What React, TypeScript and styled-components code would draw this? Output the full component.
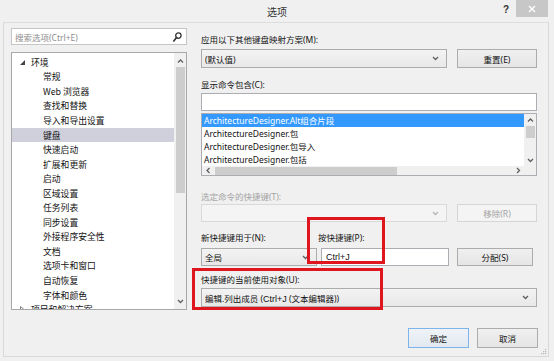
import React from "react";
import styled, { createGlobalStyle, css } from "styled-components";

const Global = createGlobalStyle`
  html, body { margin: 0; padding: 0; background: #f0f0f0; }
  body {
    font-family: "Noto Sans", "Noto Sans CJK SC", sans-serif;
    font-size: 8.5px;
    color: #111;
  }
  * { box-sizing: border-box; }
`;

const Window = styled.div`
  position: relative;
  width: 554px;
  height: 361px;
  background: #f0f0f0;
  display: flex;
  flex-direction: column;
  overflow: hidden;
`;

const TitleBar = styled.div`
  height: 22px;
  flex: none;
  display: grid;
  grid-template-columns: 1fr auto 1fr;
  align-items: center;
`;

const TitleText = styled.div`
  grid-column: 2;
  font-family: "Noto Sans CJK SC", sans-serif;
  font-size: 10px;
  color: #333;
  padding-top: 1px;
`;

const TitleControls = styled.div`
  grid-column: 3;
  justify-self: end;
  align-self: start;
  display: flex;
  align-items: flex-start;
  gap: 7px;
  padding-right: 6px;
`;

const HelpMark = styled.span`
  font-family: "Liberation Sans", sans-serif;
  font-weight: bold;
  font-size: 10px;
  color: #333;
  margin-top: 4px;
`;

const CloseButton = styled.div`
  width: 32px;
  height: 17px;
  background: #c7c7c7;
  color: #fff;
  display: flex;
  align-items: center;
  justify-content: center;
`;

const Frame = styled.div`
  position: relative;
  margin: 0 5px 0 3px;
  height: 335px;
  border: 1px solid #d9d9d9;
  border-top-color: #dedede;
  display: grid;
  grid-template-columns: 176px 336px;
  column-gap: 14px;
  padding: 5px 0 0 7px;
`;

const LeftCol = styled.div`
  display: flex;
  flex-direction: column;
  gap: 7px;
`;

const SearchBox = styled.div`
  height: 17px;
  background: #fff;
  border: 1px solid #c5c5c5;
  display: flex;
  align-items: center;
  justify-content: space-between;
  padding: 0 4px 0 3px;
  color: #8d8d8d;
`;

const Tree = styled.div`
  height: 258px;
  background: #fff;
  border: 1px solid #a8a8a8;
  display: grid;
  grid-template-columns: 1fr 12px;
  overflow: hidden;
`;

const TreeItems = styled.div`
  padding-top: 2px;
  overflow: hidden;
`;

const TreeRow = styled.div<{ $level: number; $selected?: boolean }>`
  height: 14.56px;
  display: flex;
  align-items: center;
  padding-left: ${(p) => (p.$level === 0 ? 8 : 31)}px;
  gap: 6px;
  white-space: nowrap;
  font-family: "Noto Sans CJK SC", sans-serif;
  font-size: 8.8px;
  background: ${(p) => (p.$selected ? "#cfd0dc" : "transparent")};
`;

const ScrollV = styled.div`
  background: #f0f0f0;
  display: flex;
  flex-direction: column;
  align-items: center;
`;

const ArrowCell = styled.div`
  height: 12px;
  width: 100%;
  flex: none;
  display: flex;
  align-items: center;
  justify-content: center;
`;

const Thumb = styled.div<{ $h: number }>`
  width: 9px;
  height: ${(p) => p.$h}px;
  background: #cdcdcd;
  flex: none;
`;

const Spacer = styled.div`
  flex: 1;
`;

const RightCol = styled.div`
  display: flex;
  flex-direction: column;
`;

const Label = styled.div<{ $mt?: number; $disabled?: boolean }>`
  height: 14px;
  line-height: 14px;
  margin-top: ${(p) => p.$mt ?? 0}px;
  color: ${(p) => (p.$disabled ? "#a3a3a3" : "#111")};
  white-space: nowrap;
`;

const Row = styled.div<{ $mt?: number; $cols: string; $h: number }>`
  display: grid;
  grid-template-columns: ${(p) => p.$cols};
  height: ${(p) => p.$h}px;
  margin-top: ${(p) => p.$mt ?? 0}px;
`;

const LabelRow = styled.div<{ $mt?: number }>`
  display: grid;
  grid-template-columns: 117px 1fr;
  height: 14px;
  line-height: 14px;
  margin-top: ${(p) => p.$mt ?? 0}px;
`;

const Combo = styled.div<{ $disabled?: boolean }>`
  border: 1px solid ${(p) => (p.$disabled ? "#d9d9d9" : "#acacac")};
  background: ${(p) =>
    p.$disabled ? "#f4f4f4" : "linear-gradient(#f3f3f3, #e8e8e8)"};
  display: flex;
  align-items: center;
  justify-content: space-between;
  padding: 0 7px 0 3px;
  white-space: nowrap;
  overflow: hidden;
`;

const Button = styled.div<{ $disabled?: boolean; $primary?: boolean }>`
  border: 1px solid #acacac;
  background: linear-gradient(#f0f0f0, #e5e5e5);
  display: flex;
  align-items: center;
  justify-content: center;
  white-space: nowrap;
  color: #111;
  ${(p) =>
    p.$disabled &&
    css`
      border-color: #d5d5d5;
      background: #f4f4f4;
      color: #a3a3a3;
    `}
  ${(p) =>
    p.$primary &&
    css`
      border-color: #7eb4ea;
      background: linear-gradient(#eef3f8, #e2e9f0);
    `}
`;

const TextInput = styled.div<{ $mt?: number; $h?: number }>`
  height: ${(p) => p.$h ?? 18}px;
  margin-top: ${(p) => p.$mt ?? 0}px;
  background: #fff;
  border: 1px solid #abadb3;
  display: flex;
  align-items: center;
  padding-left: 4px;
`;

const KeyText = styled.span`
  font-family: "Liberation Sans", "Noto Sans CJK SC", sans-serif;
  font-size: 9px;
`;

const ListBox = styled.div`
  height: 63px;
  margin-top: 2px;
  background: #fff;
  border: 1px solid #abadb3;
  display: grid;
  grid-template-columns: 1fr 12px;
  grid-template-rows: 1fr 9px;
  overflow: hidden;
`;

const ListItems = styled.div`
  overflow: hidden;
`;

const ListItem = styled.div<{ $selected?: boolean }>`
  height: 13px;
  line-height: 13px;
  padding-left: 2px;
  white-space: nowrap;
  background: ${(p) => (p.$selected ? "#3399ff" : "transparent")};
  color: ${(p) => (p.$selected ? "#fff" : "#111")};
`;

const ScrollH = styled.div`
  background: #f0f0f0;
  display: flex;
  align-items: center;
`;

const ArrowCellH = styled.div`
  width: 12px;
  height: 100%;
  flex: none;
  display: flex;
  align-items: center;
  justify-content: center;
`;

const ThumbH = styled.div`
  height: 8px;
  width: 182px;
  background: #cdcdcd;
  margin-left: 1px;
`;

const Corner = styled.div`
  background: #f0f0f0;
`;

const FooterRow = styled.div`
  display: flex;
  justify-content: flex-end;
  gap: 8px;
  margin-top: 21px;
  margin-right: -1px;
  height: 20px;
`;

const FooterButton = styled(Button)`
  width: 61px;
`;

const Annotation = styled.div<{ $x: number; $y: number; $w: number; $h: number }>`
  position: absolute;
  left: ${(p) => p.$x}px;
  top: ${(p) => p.$y}px;
  width: ${(p) => p.$w}px;
  height: ${(p) => p.$h}px;
  border: 3px solid #e0161f;
  pointer-events: none;
`;

const Grip = styled.svg`
  position: absolute;
  right: 1px;
  bottom: 1px;
`;

type Dir = "up" | "down" | "left" | "right";
const chevronPaths: Record<Dir, string> = {
  up: "M1 4.5 L3.5 2 L6 4.5",
  down: "M1 2 L3.5 4.5 L6 2",
  left: "M4.5 1 L2 3.5 L4.5 6",
  right: "M2 1 L4.5 3.5 L2 6",
};

const Chevron = ({ dir, color = "#606060" }: { dir: Dir; color?: string }) => (
  <svg width="7" height="7" viewBox="0 0 7 7">
    <path d={chevronPaths[dir]} fill="none" stroke={color} strokeWidth="1.3" />
  </svg>
);

const Expanded = () => (
  <svg width="5" height="5" viewBox="0 0 5 5">
    <path d="M5 0 L5 5 L0 5 Z" fill="#444" />
  </svg>
);

const Collapsed = () => (
  <svg width="5" height="7" viewBox="0 0 5 7">
    <path d="M0.5 0.5 L4 3.5 L0.5 6.5 Z" fill="none" stroke="#777" strokeWidth="0.9" />
  </svg>
);

const SearchIcon = () => (
  <svg width="9" height="10" viewBox="0 0 9 10">
    <circle cx="5.4" cy="3.6" r="2.7" fill="none" stroke="#333" strokeWidth="1.3" />
    <path d="M3.5 5.6 L0.8 9" stroke="#333" strokeWidth="1.6" strokeLinecap="round" />
  </svg>
);

const CloseX = () => (
  <svg width="8" height="8" viewBox="0 0 8 8">
    <path d="M1 1 L7 7 M7 1 L1 7" stroke="#fff" strokeWidth="1.4" />
  </svg>
);

const treeItems: { text: string; level: number; selected?: boolean; collapsed?: boolean }[] = [
  { text: "环境", level: 0 },
  { text: "常规", level: 1 },
  { text: "Web 浏览器", level: 1 },
  { text: "查找和替换", level: 1 },
  { text: "导入和导出设置", level: 1 },
  { text: "键盘", level: 1, selected: true },
  { text: "快速启动", level: 1 },
  { text: "扩展和更新", level: 1 },
  { text: "启动", level: 1 },
  { text: "区域设置", level: 1 },
  { text: "任务列表", level: 1 },
  { text: "同步设置", level: 1 },
  { text: "外接程序安全性", level: 1 },
  { text: "文档", level: 1 },
  { text: "选项卡和窗口", level: 1 },
  { text: "自动恢复", level: 1 },
  { text: "字体和颜色", level: 1 },
  { text: "项目和解决方案", level: 0, collapsed: true },
];

const commands = [
  "ArchitectureDesigner.Alt组合片段",
  "ArchitectureDesigner.包",
  "ArchitectureDesigner.包导入",
  "ArchitectureDesigner.包括",
  "ArchitectureDesigner.边界",
];

export default function App() {
  return (
    <>
      <Global />
      <Window>
        <TitleBar>
          <TitleText>选项</TitleText>
          <TitleControls>
            <HelpMark>?</HelpMark>
            <CloseButton>
              <CloseX />
            </CloseButton>
          </TitleControls>
        </TitleBar>
        <Frame>
          <LeftCol>
            <SearchBox>
              <span>搜索选项(Ctrl+E)</span>
              <SearchIcon />
            </SearchBox>
            <Tree>
              <TreeItems>
                {treeItems.map((it) => (
                  <TreeRow key={it.text} $level={it.level} $selected={it.selected}>
                    {it.level === 0 && (it.collapsed ? <Collapsed /> : <Expanded />)}
                    <span>{it.text}</span>
                  </TreeRow>
                ))}
              </TreeItems>
              <ScrollV>
                <ArrowCell style={{ marginTop: 2 }}>
                  <Chevron dir="up" />
                </ArrowCell>
                <Thumb $h={126} />
                <Spacer />
                <ArrowCell style={{ marginBottom: 2 }}>
                  <Chevron dir="down" />
                </ArrowCell>
              </ScrollV>
            </Tree>
          </LeftCol>

          <RightCol>
            <Label $mt={5}>应用以下其他键盘映射方案(M):</Label>
            <Row $mt={2} $cols="246px 80px" $h={19} style={{ columnGap: 10 }}>
              <Combo>
                <span>(默认值)</span>
                <Chevron dir="down" />
              </Combo>
              <Button>重置(E)</Button>
            </Row>

            <Label $mt={10}>显示命令包含(C):</Label>
            <TextInput $mt={1} />

            <ListBox>
              <ListItems>
                {commands.map((c, i) => (
                  <ListItem key={c} $selected={i === 0}>
                    {c}
                  </ListItem>
                ))}
              </ListItems>
              <ScrollV>
                <ArrowCell>
                  <Chevron dir="up" />
                </ArrowCell>
                <Thumb $h={12} />
                <Spacer />
                <ArrowCell>
                  <Chevron dir="down" />
                </ArrowCell>
              </ScrollV>
              <ScrollH>
                <ArrowCellH>
                  <Chevron dir="left" />
                </ArrowCellH>
                <ThumbH />
                <Spacer />
                <ArrowCellH>
                  <Chevron dir="right" />
                </ArrowCellH>
              </ScrollH>
              <Corner />
            </ListBox>

            <Label $mt={14} $disabled>
              选定命令的快捷键(T):
            </Label>
            <Row $cols="246px 80px" $h={18} style={{ columnGap: 10 }}>
              <Combo $disabled>
                <span />
                <Chevron dir="down" color="#b5b5b5" />
              </Combo>
              <Button $disabled>移除(R)</Button>
            </Row>

            <LabelRow $mt={9}>
              <span>新快捷键用于(N):</span>
              <span>按快捷键(P):</span>
            </LabelRow>
            <Row $mt={3} $cols="116px 128px 80px" $h={18} style={{ columnGap: 4 }}>
              <Combo>
                <span>全局</span>
                <Chevron dir="down" />
              </Combo>
              <TextInput>
                <KeyText>Ctrl+J</KeyText>
              </TextInput>
              <Button style={{ marginLeft: 4 }}>分配(S)</Button>
            </Row>

            <Label $mt={7}>快捷键的当前使用对象(U):</Label>
            <Row $mt={1} $cols="336px" $h={19}>
              <Combo>
                <span>
                  编辑.列出成员 (<KeyText>Ctrl+J</KeyText> (文本编辑器))
                </span>
                <Chevron dir="down" />
              </Combo>
            </Row>

            <FooterRow>
              <FooterButton $primary>确定</FooterButton>
              <FooterButton>取消</FooterButton>
            </FooterRow>
          </RightCol>

          <Grip width="8" height="8" viewBox="0 0 8 8">
            {[
              [6, 2],
              [6, 4],
              [4, 4],
              [6, 6],
              [4, 6],
              [2, 6],
            ].map(([x, y]) => (
              <rect key={`${x}-${y}`} x={x} y={y} width="1.2" height="1.2" fill="#b8b8b8" />
            ))}
          </Grip>
        </Frame>

        <Annotation $x={307} $y={217} $w={78} $h={47} />
        <Annotation $x={192} $y={268} $w={191} $h={42} />
      </Window>
    </>
  );
}
